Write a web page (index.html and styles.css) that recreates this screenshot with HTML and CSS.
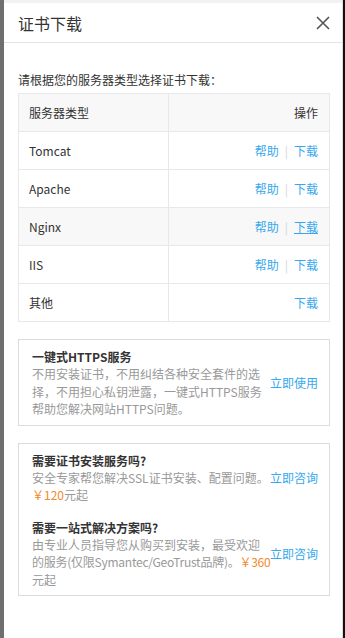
FILE: index.html
```html
<!DOCTYPE html>
<html lang="zh-CN">
<head>
  <meta charset="UTF-8" />
  <meta name="viewport" content="width=device-width, initial-scale=1.0"/>
  <title>证书下载</title>
  <link rel="stylesheet" href="styles.css">
</head>
<body>
  <div class="edge-left"></div>

  <div class="drawer">
    <div class="top-shade"></div>
    <header class="drawer-head">
      <h1>证书下载</h1>
      <svg class="close" width="14" height="14" viewBox="0 0 14 14">
        <path d="M1 1 L13 13 M13 1 L1 13" stroke="#555" stroke-width="1.6" fill="none"/>
      </svg>
    </header>

    <div class="drawer-body">
      <p class="tip">请根据您的服务器类型选择证书下载：</p>

      <table class="servers">
        <thead>
          <tr><th class="name">服务器类型</th><th class="op">操作</th></tr>
        </thead>
        <tbody>
          <tr><td>Tomcat</td><td class="op"><a href="#">帮助</a><span class="sep">|</span><a href="#">下载</a></td></tr>
          <tr><td>Apache</td><td class="op"><a href="#">帮助</a><span class="sep">|</span><a href="#">下载</a></td></tr>
          <tr class="hover"><td>Nginx</td><td class="op"><a href="#">帮助</a><span class="sep">|</span><a href="#" class="under">下载</a></td></tr>
          <tr><td>IIS</td><td class="op"><a href="#">帮助</a><span class="sep">|</span><a href="#">下载</a></td></tr>
          <tr><td>其他</td><td class="op"><a href="#">下载</a></td></tr>
        </tbody>
      </table>

      <div class="promo">
        <div class="promo-item">
          <div class="promo-text">
            <h3>一键式HTTPS服务</h3>
            <p>不用安装证书，不用纠结各种安全套件的选择，不用担心私钥泄露，一键式HTTPS服务帮助您解决网站HTTPS问题。</p>
          </div>
          <a href="#" class="action">立即使用</a>
        </div>
      </div>

      <div class="promo">
        <div class="promo-item">
          <div class="promo-text">
            <h3>需要证书安装服务吗?</h3>
            <p><span class="nowrap">安全专家帮您解决SSL证书安装、配置问题。</span><br><span class="price">￥120</span>元起</p>
          </div>
          <a href="#" class="action top">立即咨询</a>
        </div>
        <div class="promo-item">
          <div class="promo-text">
            <h3>需要一站式解决方案吗?</h3>
            <p>由专业人员指导您从购买到安装，最受欢迎<br><span class="nowrap tight">的服务(仅限Symantec/GeoTrust品牌)。<span class="price">￥360</span></span><br>元起</p>
          </div>
          <a href="#" class="action">立即咨询</a>
        </div>
      </div>
    </div>
  </div>

  <div class="edge-right"></div>
</body>
</html>
```

FILE: styles.css
```css
html, body {
  margin: 0;
  height: 100%;
}
body {
  display: flex;
  background: #000;
  font-family: "Noto Sans CJK SC", "Noto Sans", sans-serif;
  color: #333;
  font-size: 12px;
  overflow: hidden;
}
.edge-left {
  flex: none;
  width: 4px;
  background: #6f6f6f;
}
.edge-right {
  flex: none;
  width: 2px;
  background: #111;
}
.drawer {
  flex: none;
  width: 338px;
  background: #fff;
  border-right: 1px solid #ddd;
}
.top-shade {
  height: 3px;
  background: #f2f2f2;
}
.drawer-head {
  height: 39px;
  display: flex;
  align-items: center;
  justify-content: space-between;
  padding: 0 12px 0 14px;
  border-bottom: 1px solid #e3e3e3;
}
.drawer-head h1 {
  margin: 0;
  font-size: 16px;
  font-weight: normal;
  color: #333;
}
.close {
  display: block;
}
.drawer-body {
  padding: 27px 12px 0 14px;
}
.tip {
  margin: 0 0 3px;
  line-height: 20px;
}
.servers {
  width: 100%;
  border-collapse: collapse;
  border: 1px solid #e8e8e8;
  table-layout: fixed;
}
.servers th, .servers td {
  height: 37px;
  padding: 0 11px 0 10px;
  border: 1px solid #e8e8e8;
  text-align: left;
  font-weight: normal;
  font-size: 12px;
}
.servers th.name {
  width: 128px;
}
.servers thead th {
  background: #f8f8f8;
}
.servers tr.hover td {
  background: #f8f8f8;
}
.servers .op {
  text-align: right;
}
.servers a {
  color: #35a8ee;
  text-decoration: none;
}
.servers a.under {
  text-decoration: underline;
}
.sep {
  color: #d6d6d6;
  margin: 0 6px;
}
.promo {
  margin-top: 17px;
  border: 1px solid #dcdcdc;
  padding: 8px 12px 7px 13px;
}
.promo-item {
  display: flex;
  align-items: center;
}
.promo-item + .promo-item {
  margin-top: 15px;
}
.promo-text {
  flex: none;
  width: 233px;
}
.promo-text h3 {
  margin: 0;
  font-size: 12px;
  font-weight: bold;
  color: #333;
  line-height: 17px;
}
.promo-text p {
  margin: 0;
  color: #999;
  line-height: 17.5px;
}
.nowrap {
  white-space: nowrap;
}
.tight {
  letter-spacing: -0.25px;
}
.price {
  color: #f08a2c;
}
.action {
  flex: none;
  margin-left: 5px;
  white-space: nowrap;
  color: #35a8ee;
  text-decoration: none;
  font-size: 12px;
}
.action.top {
  align-self: flex-start;
  margin-top: 17px;
}
```
